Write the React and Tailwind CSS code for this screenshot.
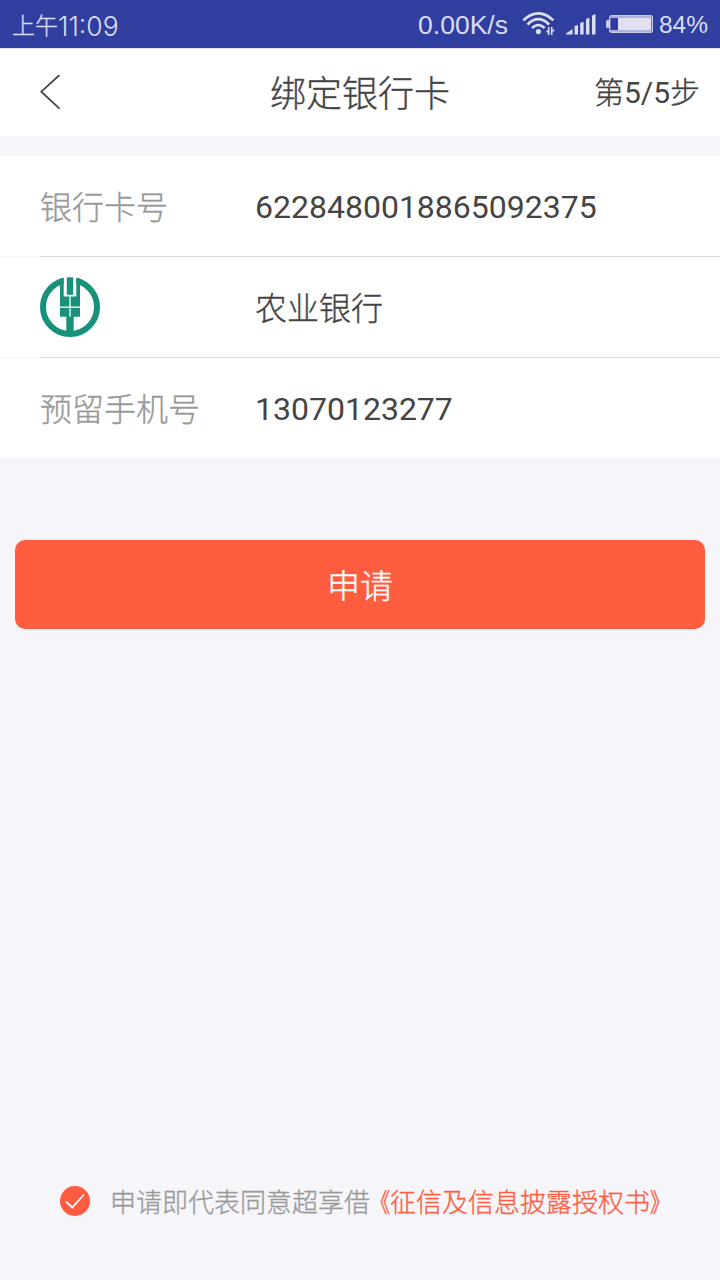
import React from "react";

function WifiIcon() {
  return (
    <svg width="34" height="26" viewBox="0 0 34 26" fill="none" stroke="#dadcef" strokeWidth="2.7">
      <path d="M1.3 9.4Q8.5 2.4 16.3 2.4T31.3 9.4" />
      <path d="M5.5 13.6Q10.5 8.2 16.3 8.2T27.1 13.6" />
      <path d="M10 17.2Q13 14 16.3 14T22.6 17.2" />
      <circle cx="16.4" cy="20.6" r="2.6" fill="#dadcef" stroke="none" />
      <path d="M26.7 16V24M29.7 16V24" strokeWidth="1.6" />
      <path d="M24.4 20.5H26.5M30.2 19.5H32.3" strokeWidth="2.2" />
    </svg>
  );
}

function SignalIcon() {
  return (
    <svg width="30" height="21" viewBox="0 0 30 21" fill="#dadcef">
      <path d="M0 20.5V19.5L6.5 15V20.5ZM8.6 20.5V12L12 11V20.5ZM14.2 20.5V9L17.6 7.8V20.5ZM20 20.5V5L23.4 3.8V20.5ZM26 20.5V1.5L29.5 0V20.5Z" />
    </svg>
  );
}

function BatteryIcon() {
  return (
    <svg width="47" height="18" viewBox="0 0 47 18">
      <rect x="0" y="5" width="3.5" height="8" rx="1.5" fill="#c9ccea" />
      <rect x="3.7" y=".8" width="42.6" height="16.4" rx="2" fill="#303f9f" stroke="#c9ccea" strokeWidth="1.4" />
      <path d="M5 2H45M5 16H45" stroke="#abb1dc" strokeWidth="2" />
      <rect x="12" y="3" width="33" height="12" fill="#dfe1f1" />
    </svg>
  );
}

function BankLogo() {
  return (
    <svg width="60" height="60" viewBox="0 0 60 60">
      <circle cx="30" cy="30" r="27" fill="none" stroke="#18917b" strokeWidth="6" />
      <path d="M23.7 0H36.3V19.6H23.7Z" fill="#fff" />
      <path d="M26.8 0.3H33.2V17.8H26.8Z" fill="#18917b" />
      <path d="M20 1.5H23.7V19.6H36.3V1.5H40V39.7H33.7V57H26.3V39.7H20Z" fill="#18917b" />
      <path d="M30 19.5V39.7M20 30.2H40" stroke="#fff" strokeWidth="1.3" />
    </svg>
  );
}

function Row({ label, children, last }) {
  return (
    <div className={last ? "flex h-[100px]" : "flex h-[101px]"}>
      <div className={last ? "w-10 shrink-0" : "w-10 shrink-0 border-b border-[#f5f5f5]"} />
      <div className={last ? "flex grow items-center" : "flex grow items-center border-b border-[#dddddd]"}>
        <div className="w-[215px] shrink-0 text-[#999999]">{label}</div>
        {children}
      </div>
    </div>
  );
}

function Hanzi({ children }) {
  return <div className="pt-1 [-webkit-text-stroke:0.35px]">{children}</div>;
}

export default function App() {
  return (
    <div className="flex h-[1280px] w-[720px] flex-col overflow-hidden bg-[#f5f5fa] font-[Roboto,'Noto_Sans_CJK_SC_Light','Noto_Sans_CJK_SC',sans-serif] text-[#444444]">
      <div className="flex h-12 shrink-0 items-center bg-[#303f9f] pr-3 pl-3 font-['Liberation_Sans','Noto_Sans_CJK_SC_Light',sans-serif] text-[26px] leading-12 text-[#dadcef]">
        <span className="flex grow items-center pt-[3px]">
          <span className="text-[23px] [-webkit-text-stroke:0.35px]">上午</span>
          <span className="font-[Inter] text-[26.5px] font-light">11:09</span>
        </span>
        <span className="mr-[14px] pt-[2px] text-[26.5px]">0.00K/s</span>
        <WifiIcon />
        <span className="mr-[10px] ml-[10px] pt-px"><SignalIcon /></span>
        <BatteryIcon />
        <span className="ml-[6px] pt-[2px] text-[24.5px]">84%</span>
      </div>

      <header className="grid h-[88px] shrink-0 grid-cols-[1fr_auto_1fr] items-center border-t border-[#e4e4e8] bg-white px-5">
        <svg className="ml-5" width="21" height="36" viewBox="0 0 21 36" fill="none" stroke="#444444" strokeWidth="1.8">
          <path d="M19.5 0L1.3 16.7L19.5 33.7" />
        </svg>
        <h1 className="pt-[5px] text-4xl [-webkit-text-stroke:0.35px]">绑定银行卡</h1>
        <span className="text-right text-[30px]">
          <span className="[-webkit-text-stroke:0.35px]">第</span>5/5<span className="[-webkit-text-stroke:0.35px]">步</span>
        </span>
      </header>

      <main className="mt-5 bg-white text-[32px]">
        <Row label={<Hanzi>银行卡号</Hanzi>}>
          <div className="pt-px">6228480018865092375</div>
        </Row>
        <Row label={<BankLogo />}>
          <Hanzi>农业银行</Hanzi>
        </Row>
        <Row label={<Hanzi>预留手机号</Hanzi>} last>
          <div className="pt-px">13070123277</div>
        </Row>
      </main>

      <button className="mx-[15px] mt-[82px] h-[89px] shrink-0 rounded-[10px] bg-[#ff5c40] pt-1 text-[33px] text-white [-webkit-text-stroke:0.35px]">申请</button>

      <footer className="mt-auto mb-[58px] flex h-[42px] items-center pl-[60px] text-[26px] [-webkit-text-stroke:0.3px]">
        <svg width="30" height="30" viewBox="0 0 30 30" fill="none">
          <circle cx="15" cy="15" r="15" fill="#ff5c40" />
          <path d="M6 15.5L12.3 21.5L24 8.5" stroke="#fff" strokeWidth="1.8" />
        </svg>
        <span className="ml-5 pt-1 text-[#999999]">申请即代表同意超享借</span>
        <span className="-ml-[6px] flex pt-1 text-[#ff5c40]">
          <span className="origin-right scale-x-75 [-webkit-text-stroke:0.6px]">《</span>
          <span>征信及信息披露授权书</span>
          <span className="origin-left scale-x-75 [-webkit-text-stroke:0.6px]">》</span>
        </span>
      </footer>
    </div>
  );
}
